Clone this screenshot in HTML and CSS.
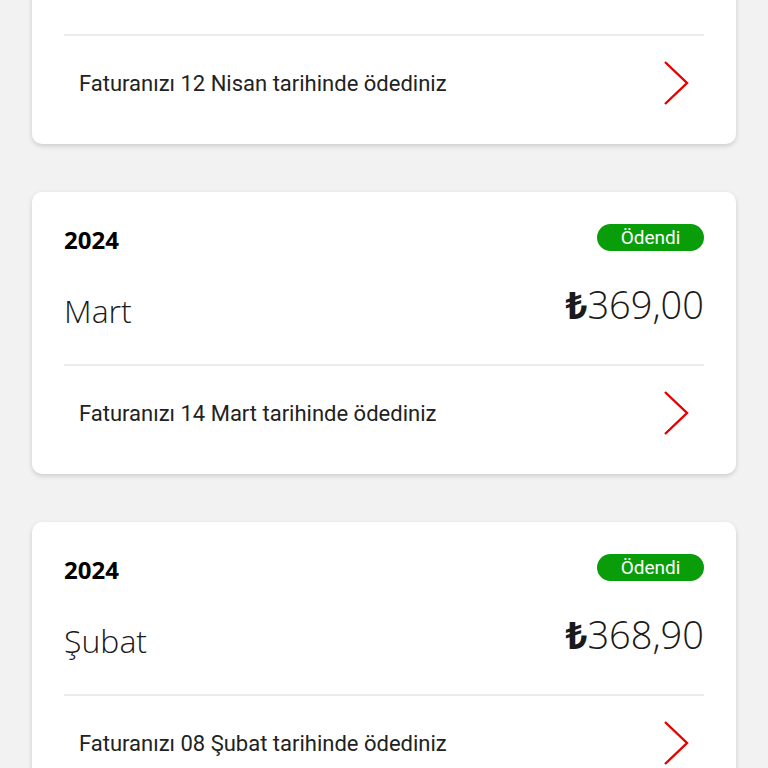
FILE: index.html
```html
<!DOCTYPE html>
<html lang="tr">
  <head>
    <meta charset="utf-8">
    <meta name="viewport" content="width=device-width, initial-scale=1">
    <title>Fatura geçmişi</title>
    <link rel="stylesheet" href="styles.css">
  </head>
  <body>
    <div class="billList">
      <div class="billCard">
        <div class="billHead">
          <span class="billYear">2024</span>
          <span class="billBadge">Ödendi</span>
        </div>
        <div class="billMain">
          <span class="billMonth">Nisan</span>
          <span class="billPrice"><b>₺</b>371,20</span>
        </div>
        <a class="billFoot" href="#">
          <span>Faturanızı 12 Nisan tarihinde ödediniz</span>
          <svg class="billArrow" viewBox="0 0 28 46" width="28" height="46"><polyline points="3,2 25,23 3,44" /></svg>
        </a>
      </div>

      <div class="billCard">
        <div class="billHead">
          <span class="billYear">2024</span>
          <span class="billBadge">Ödendi</span>
        </div>
        <div class="billMain">
          <span class="billMonth">Mart</span>
          <span class="billPrice"><b>₺</b>369,00</span>
        </div>
        <a class="billFoot" href="#">
          <span>Faturanızı 14 Mart tarihinde ödediniz</span>
          <svg class="billArrow" viewBox="0 0 28 46" width="28" height="46"><polyline points="3,2 25,23 3,44" /></svg>
        </a>
      </div>

      <div class="billCard">
        <div class="billHead">
          <span class="billYear">2024</span>
          <span class="billBadge">Ödendi</span>
        </div>
        <div class="billMain">
          <span class="billMonth">Şubat</span>
          <span class="billPrice"><b>₺</b>368,90</span>
        </div>
        <a class="billFoot" href="#">
          <span>Faturanızı 08 Şubat tarihinde ödediniz</span>
          <svg class="billArrow" viewBox="0 0 28 46" width="28" height="46"><polyline points="3,2 25,23 3,44" /></svg>
        </a>
      </div>
    </div>
  </body>
</html>
```

FILE: styles.css
```css
html, body {
  margin: 0;
  background-color: #f2f2f2;
  font-family: "Open Sans", "Noto Sans", sans-serif;
  color: #1a1a1a;
}

/* list is scrolled: the first card is cut at the top */
.billList {
  display: flex;
  flex-direction: column;
  gap: 48px;
  padding: 0 32px;
  margin-top: -138px;
}

.billCard {
  background-color: #fff;
  border-radius: 10px;
  box-shadow: 0 2px 5px rgba(0, 0, 0, 0.16);
  padding: 0 32px;
}

.billHead {
  display: flex;
  justify-content: space-between;
  align-items: flex-start;
  padding-top: 32px;
  height: 28px;
}

.billYear {
  font-weight: 700;
  font-size: 24px;
  line-height: 28px;
  padding-top: 2px;
  color: #000;
}

.billBadge {
  background-color: #0a9d0a;
  color: #fff;
  font-family: Roboto, sans-serif;
  font-size: 19px;
  line-height: 27px;
  width: 107px;
  text-align: center;
  border-radius: 14px;
}

.billMain {
  display: flex;
  justify-content: space-between;
  align-items: center;
  height: 114px;
  box-sizing: border-box;
  border-bottom: 2px solid #ebebeb;
}

.billMonth {
  font-weight: 300;
  font-size: 32px;
  padding-top: 4px;
}

.billPrice {
  font-weight: 300;
  font-size: 38px;
  padding-bottom: 8px;
}

.billPrice b {
  font-weight: 700;
}

.billFoot {
  display: flex;
  justify-content: space-between;
  align-items: center;
  height: 108px;
  padding-left: 15px;
  padding-bottom: 14px;
  box-sizing: border-box;
  color: #222;
  text-decoration: none;
  font-family: Roboto, sans-serif;
  font-size: 22px;
}

.billArrow {
  margin-right: 14px;
}

.billArrow polyline {
  fill: none;
  stroke: #e60000;
  stroke-width: 2.4;
}
```
